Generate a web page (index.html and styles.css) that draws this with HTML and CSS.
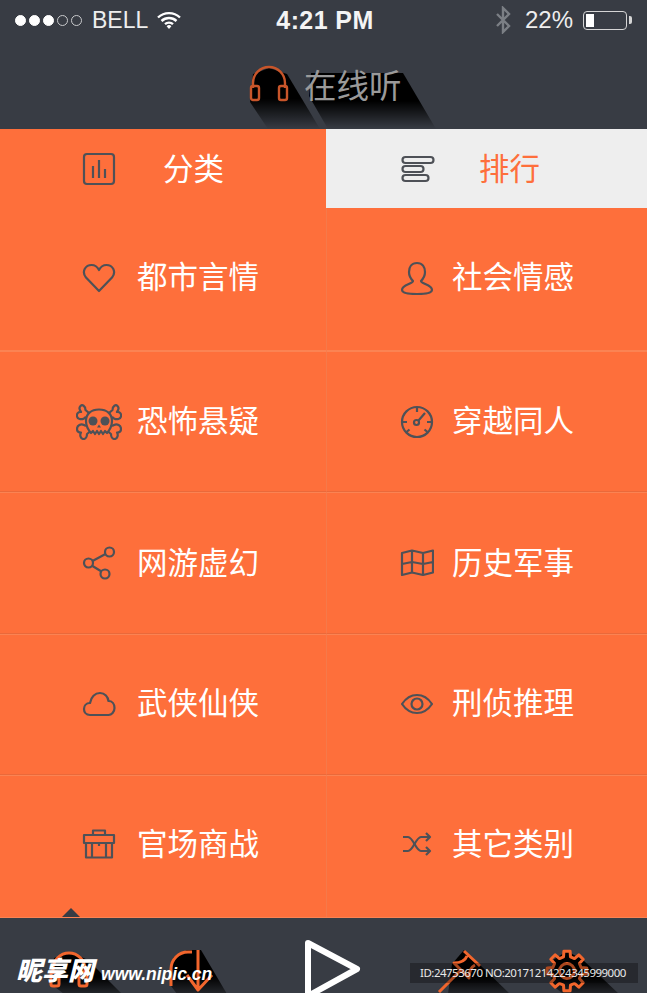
FILE: index.html
```html
<!DOCTYPE HTML>
<html>
    <head>
        <meta charset="UTF-8">
        <title>在线听</title>
        <link rel="stylesheet" href="styles.css">
    </head>
    <body>
        <div id="wrap">
            <svg class="defs" width="0" height="0">
                <defs>
                    <linearGradient id="fade" x1="0" y1="0" x2="0" y2="1">
                        <stop offset="0.5" stop-color="#000"/>
                        <stop offset="1" stop-color="#000" stop-opacity="0"/>
                    </linearGradient>
                    <linearGradient id="fade2" x1="0" y1="0" x2="0" y2="1">
                        <stop offset="0.6" stop-color="#000"/>
                        <stop offset="1" stop-color="#000" stop-opacity="0.35"/>
                    </linearGradient>
                </defs>
            </svg>

            <div class="head">
                <div class="status">
                    <div class="status-left">
                        <span class="dots"><i class="on"></i><i class="on"></i><i class="on"></i><i></i><i></i></span>
                        <span class="carrier">BELL</span>
                        <svg class="wifi" width="26" height="20" viewBox="0 0 26 20"><path d="M2 7.500a16 16 0 0 1 22 0M5.500 11a11 11 0 0 1 15 0M9 14.200a6 6 0 0 1 8 0" fill="none" stroke="#fff" stroke-width="2.400"/><path d="M10.600 16.200a3.400 3.400 0 0 1 4.800 0L13 19z" fill="#fff"/></svg>
                    </div>
                    <span class="time">4:21 PM</span>
                    <div class="status-right">
                        <svg class="bt" width="16" height="28" viewBox="0 0 16 28"><path d="M2 8l12 12-6 6V2l6 6L2 20" fill="none" stroke="#7b7f85" stroke-width="2.400"/></svg>
                        <span class="pct">22%</span>
                        <span class="batt"><i></i></span>
                    </div>
                </div>
                <div class="title">
                    <svg class="shadow" width="190" height="63" viewBox="0 0 190 63">
                        <path d="M1 36L19 63H71L38 8 20 2 4 8z" fill="url(#fade)"/>
                        <path d="M60 30L79 63H187L154 7H62z" fill="url(#fade)"/>
                    </svg>
                    <svg class="phones" width="40" height="38" viewBox="0 0 40 38"><path d="M4 24V19a16 16 0 0 1 32 0v5" class="dim"/><rect x="2" y="22" width="8" height="14" rx="2" class="dim"/><rect x="30" y="22" width="8" height="14" rx="2" class="dim"/></svg>
                    <span class="title-text">在线听</span>
                </div>
            </div>

            <div class="tabs">
                <div class="tab tab-cate">
                    <svg width="34" height="34" viewBox="0 0 34 34"><rect x="2" y="2" width="30" height="30" rx="3" class="ln"/><path d="M11 14v12M17 8v18M23 17v9" class="ln"/></svg>
                    <span>分类</span>
                </div>
                <div class="tab tab-rank">
                    <svg width="34" height="28" viewBox="0 0 34 28"><rect x="1.500" y="2" width="31" height="6" rx="3" class="ln"/><rect x="1.500" y="11" width="21" height="6" rx="3" class="ln"/><rect x="1.500" y="20" width="26" height="6" rx="3" class="ln"/></svg>
                    <span>排行</span>
                </div>
            </div>

            <div class="grid">
                <div class="cell">
                    <span class="ico"><svg width="34" height="30" viewBox="0 0 34 30"><path d="M17 28L4 14.500C-1 8 4 2 9.500 2 13 2 15.500 4 17 7 18.500 4 21 2 24.500 2 30 2 35 8 30 14.500z" class="ln"/></svg></span>
                    <span class="name">都市言情</span>
                </div>
                <div class="cell">
                    <span class="ico"><svg width="34" height="34" viewBox="0 0 34 34"><path d="M17 2c-5.500 0-8 4-8 9 0 4 2 7 4 9 0 3-11 3.500-11 9 0 3 7 4 15 4s15-1 15-4c0-5.500-11-6-11-9 2-2 4-5 4-9 0-5-2.500-9-8-9z" class="ln"/></svg></span>
                    <span class="name">社会情感</span>
                </div>
                <div class="cell">
                    <span class="ico"><svg width="46" height="36" viewBox="0 0 46 36"><g class="ln"><path d="M13 9L9.500 6C9.500 2 6 0 4.500 2 3 3.500 3.500 6 5 8 2 7.500.5 10 1 12.500 1.500 15 5 16 8 14.500L10 13"/><path d="M33 9l3.500-3c0-4 3.500-6 5-4 1.500 1.500 1 4-.5 6 3-.5 4.500 2 4 4.500-.5 2.500-4 3.500-7 2L36 13"/><path d="M10 22l-2-1c-3-1.500-7 0-7 4 0 2.500 2 3.500 4 3.500-1.500 2.500-.5 6.500 2.500 6.500 2.500 0 3.500-3 3.500-5l3-2.500"/><path d="M36 22l2-1c3-1.500 7 0 7 4 0 2.500-2 3.500-4 3.500 1.500 2.500.5 6.500-2.500 6.500-2.500 0-3.500-3-3.500-5L32 27.500"/><path d="M15 29C11.500 25 10 21 10 17 10 10 15 5.500 23 5.500S36 10 36 17C36 21 34.500 25 31 29L29 27 27 30 25 27 23 30 21 27 19 30 17 27z"/></g><circle cx="17" cy="17" r="4.500" class="fl"/><circle cx="29" cy="17" r="4.500" class="fl"/><path d="M23 20.500l-2 3h4z" class="fl"/></svg></span>
                    <span class="name">恐怖悬疑</span>
                </div>
                <div class="cell">
                    <span class="ico"><svg width="34" height="34" viewBox="0 0 34 34"><circle cx="17" cy="17" r="15" class="ln"/><path d="M17 2v5M2 17h5M27 17h5M6.500 27l3-2.500M27.500 27l-3-2.500M18.500 15.500L25 8" class="ln"/><circle cx="16.500" cy="17.500" r="2.500" class="ln"/></svg></span>
                    <span class="name">穿越同人</span>
                </div>
                <div class="cell">
                    <span class="ico"><svg width="34" height="34" viewBox="0 0 34 34"><g class="ln"><circle cx="27.500" cy="6" r="4.500"/><circle cx="6.500" cy="17" r="4.500"/><circle cx="23" cy="28" r="4.500"/><path d="M10.500 15l13-7M10.500 20l9 5.500"/></g></svg></span>
                    <span class="name">网游虚幻</span>
                </div>
                <div class="cell">
                    <span class="ico"><svg width="34" height="28" viewBox="0 0 34 28"><path d="M2 4l10-2.500L23 4l10-2.500v22L23 26l-11-2.500L2 26zM12 1.500v22M23 4v22M2 15l10-2 11 2 10-2" class="ln"/></svg></span>
                    <span class="name">历史军事</span>
                </div>
                <div class="cell">
                    <span class="ico"><svg width="34" height="26" viewBox="0 0 34 26"><path d="M8 24C4 24 2 21 2 18c0-3 2-6 6-6 1-6 5-10 10-10 5 0 8 4 8.500 8 3.500 0 6 3 6 7 0 4-3 7-6 7z" class="ln"/></svg></span>
                    <span class="name">武侠仙侠</span>
                </div>
                <div class="cell">
                    <span class="ico"><svg width="34" height="22" viewBox="0 0 34 22"><path d="M2 11C6 5 11 2 17 2s11 3 15 9c-4 6-9 9-15 9S6 17 2 11z" class="ln"/><circle cx="17" cy="11" r="5.500" class="ln"/></svg></span>
                    <span class="name">刑侦推理</span>
                </div>
                <div class="cell">
                    <span class="ico"><svg width="34" height="32" viewBox="0 0 34 32"><path d="M2 7h30v8H2zM11 7V2.500h12V7M4 15v14.500h26V15M10 15v14.500M24 15v14.500M17 14v4" class="ln"/></svg></span>
                    <span class="name">官场商战</span>
                </div>
                <div class="cell">
                    <span class="ico"><svg width="30" height="24" viewBox="0 0 30 24"><g class="ln"><path d="M1 5h5c5 0 8 14 13 14h9"/><path d="M1 19h5c5 0 8-14 13-14h9"/><path d="M24 1l4 4-4 4M24 15l4 4-4 4"/></g></svg></span>
                    <span class="name">其它类别</span>
                </div>
            </div>

            <div class="nav">
                <span class="caret"></span>
                <svg class="nav-ico" width="90" height="44" viewBox="0 0 90 44"><path d="M1 34L14 44H72L38 10 20 2 4 8z" fill="url(#fade2)"/><path d="M3 24V19a16 16 0 0 1 32 0v5" class="hot"/><rect x="1" y="22" width="8" height="14" rx="2" class="hot"/><rect x="29" y="22" width="8" height="14" rx="2" class="hot"/></svg>
                <svg class="nav-ico" width="90" height="44" viewBox="0 0 90 44"><path d="M2 36L8 44H58L32 0H18L4 8z" fill="url(#fade2)"/><path d="M2 36V19A17 17 0 0 1 19 2h4" class="hot"/><path d="M29 0V40M18 25l11 15 14-15" class="hot"/></svg>
                <svg class="nav-play" width="58" height="60" viewBox="0 0 58 60"><path d="M3 3L52 29 3 56z" class="play"/></svg>
                <svg class="nav-ico" width="90" height="44" viewBox="0 0 90 44"><path d="M26 0L42 15 72 44H10L14 14z" fill="url(#fade2)"/><path d="M26 1L42 16M29 6C27 11 22 13 16 13L31 28C31 22 33 17 37 15M23 20L1 42" class="hot"/></svg>
                <svg class="nav-ico" width="90" height="44" viewBox="0 0 90 44"><path d="M6 10L20 1 36 10 72 44H16L4 34z" fill="url(#fade2)"/><g transform="translate(20 21)"><polygon points="-3.5,-14.1 -3.1,-19.8 3.1,-19.8 3.5,-14.1 7.5,-12.4 11.8,-16.2 16.2,-11.8 12.4,-7.5 14.1,-3.5 19.8,-3.1 19.8,3.1 14.1,3.5 12.4,7.5 16.2,11.8 11.8,16.2 7.5,12.4 3.5,14.1 3.1,19.8 -3.1,19.8 -3.5,14.1 -7.5,12.4 -11.8,16.2 -16.2,11.8 -12.4,7.5 -14.1,3.5 -19.8,3.1 -19.8,-3.1 -14.1,-3.5 -12.4,-7.5 -16.2,-11.8 -11.8,-16.2 -7.5,-12.4" class="hot"/><circle r="7.500" class="hot"/></g></svg>
            </div>

            <div class="mark"><b>昵享网</b><em>www.nipic.cn</em></div>
            <div class="stamp">ID:24753670 NO:20171214224345999000</div>
        </div>
    </body>
</html>
```

FILE: styles.css
```css
body{font-family: "Noto Sans CJK SC","Liberation Sans",sans-serif;margin:0;}

#wrap{
    position: relative;
    display: flex;
    flex-direction: column;
    width: 647px;
    height: 993px;
    overflow: hidden;
    background-color: #fe6f3b;
}
.defs{
    position: absolute;
}

/* svg line helpers */
.ln{
    fill: none;
    stroke: #4e5157;
    stroke-width: 2.2;
    stroke-linejoin: round;
}
.fl{
    fill: #4e5157;
}
.dim,.hot{
    fill: none;
    stroke-width: 2.4;
}
.dim{
    stroke: #c8552a;
}
.hot{
    stroke: #f2662d;
    stroke-width: 3;
    stroke-linejoin: round;
}
.play{
    fill: none;
    stroke: #ffffff;
    stroke-width: 6;
    stroke-linejoin: round;
}

/* top */
.head{
    flex: none;
    height: 129px;
    background-color: #383c44;
    color: #ffffff;
}
.status{
    display: grid;
    grid-template-columns: 1fr auto 1fr;
    align-items: center;
    height: 40px;
    padding: 0 12px 0 15px;
    font-family: "Liberation Sans",sans-serif;
    font-size: 24px;
}
.status-left,.status-right{
    display: flex;
    align-items: center;
}
.status-right{
    justify-content: flex-end;
}
.dots{
    display: flex;
    gap: 3px;
}
.dots i{
    width: 11px;
    height: 11px;
    box-sizing: border-box;
    border: 1px solid #c9cacc;
    border-radius: 50%;
}
.dots i.on{
    background-color: #ffffff;
    border-color: #ffffff;
}
.carrier{
    margin-left: 10px;
    font-size: 23px;
    color: #eeeeee;
}
.wifi{
    margin-left: 8px;
}
.time{
    font-size: 25px;
    font-weight: bold;
    letter-spacing: .4px;
    color: #f4f4f4;
}
.bt{
    margin-right: 14px;
}
.pct{
    color: #eeeeee;
}
.batt{
    position: relative;
    width: 44px;
    height: 19px;
    margin: 0 8px 0 10px;
    box-sizing: border-box;
    padding: 2px;
    border: 1.5px solid #d5d5d5;
    border-radius: 4px;
}
.batt i{
    display: block;
    width: 8px;
    height: 100%;
    background-color: #ffffff;
}
.batt:after{
    content: "";
    position: absolute;
    top: 4px;
    right: -6px;
    width: 3px;
    height: 8px;
    background-color: #d5d5d5;
    border-radius: 0 2px 2px 0;
}
.title{
    position: relative;
    display: flex;
    align-items: center;
    gap: 15px;
    height: 89px;
    padding-left: 249px;
}
.title .shadow{
    position: absolute;
    top: 26px;
    left: 249px;
}
.phones,.title-text{
    position: relative;
}
.phones{
    margin-top: -4px;
}
.title-text{
    padding-bottom: 2px;
    font-size: 32.5px;
    line-height: 40px;
    color: #9a9a9a;
}

/* tabs */
.tabs{
    display: flex;
    flex: none;
    height: 79px;
    font-size: 30.5px;
}
.tab{
    display: flex;
    align-items: center;
    box-sizing: border-box;
}
.tab span{
    padding-bottom: 3px;
}
.tab-cate{
    width: 326px;
    gap: 47px;
    padding-left: 82px;
    color: #ffffff;
}
.tab-rank{
    width: 321px;
    gap: 44px;
    padding-left: 75px;
    background-color: #eeeeee;
    color: #fe6f3b;
}

/* categories */
.grid{
    display: grid;
    flex: none;
    grid-template-columns: 327px 320px;
    grid-template-rows: 143px 141px 142px 141px 142px;
}
.cell{
    display: flex;
    align-items: center;
    box-sizing: border-box;
    gap: 12px;
    padding-left: 67px;
    border-top: 1px solid #fb8353;
    border-bottom: 1px solid #ea693a;
}
.cell:nth-child(odd){
    gap: 15px;
    padding-left: 76px;
    border-right: 1px solid #f5794a;
}
.cell:nth-child(-n+2){
    padding-bottom: 3px;
    border-top: 0;
    border-bottom-color: #fb8353;
}
.cell:nth-child(7),.cell:nth-child(8){
    padding-bottom: 2px;
}
.cell:nth-last-child(-n+2){
    padding-bottom: 5px;
    border-bottom: 0;
}
.ico{
    display: flex;
    justify-content: center;
    width: 46px;
}
.ico svg{
    display: block;
}
.name{
    padding-bottom: 5px;
    font-size: 30.5px;
    color: #ffffff;
}

/* bottom */
.nav{
    position: relative;
    display: grid;
    flex: 1;
    grid-template-columns: 119px 137px 132px 109px 1fr;
    padding: 32px 0 0 50px;
    background-color: #383c44;
    border-top: 1px solid #fb8353;
}
.nav svg{
    overflow: visible;
}
.nav-play{
    margin: -10px 0 0 -1px;
}
.caret{
    position: absolute;
    top: -10px;
    left: 62px;
    border-left: 9px solid transparent;
    border-right: 9px solid transparent;
    border-bottom: 9px solid #383c44;
}
.mark{
    position: absolute;
    left: 16px;
    bottom: 8px;
    display: flex;
    align-items: baseline;
    gap: 7px;
    color: #ffffff;
    font-style: italic;
    font-weight: bold;
}
.mark b{
    font-size: 26px;
    line-height: 30px;
}
.mark em{
    font-family: "Liberation Sans",sans-serif;
    font-size: 17.5px;
}
.stamp{
    position: absolute;
    left: 410px;
    top: 963px;
    width: 228px;
    height: 20px;
    box-sizing: border-box;
    padding-left: 10px;
    font-family: "Noto Sans",sans-serif;
    font-size: 11.5px;
    letter-spacing: -.5px;
    line-height: 20px;
    white-space: nowrap;
    color: #e8e8e8;
    background-color: rgba(0,0,0,.3);
}
```
